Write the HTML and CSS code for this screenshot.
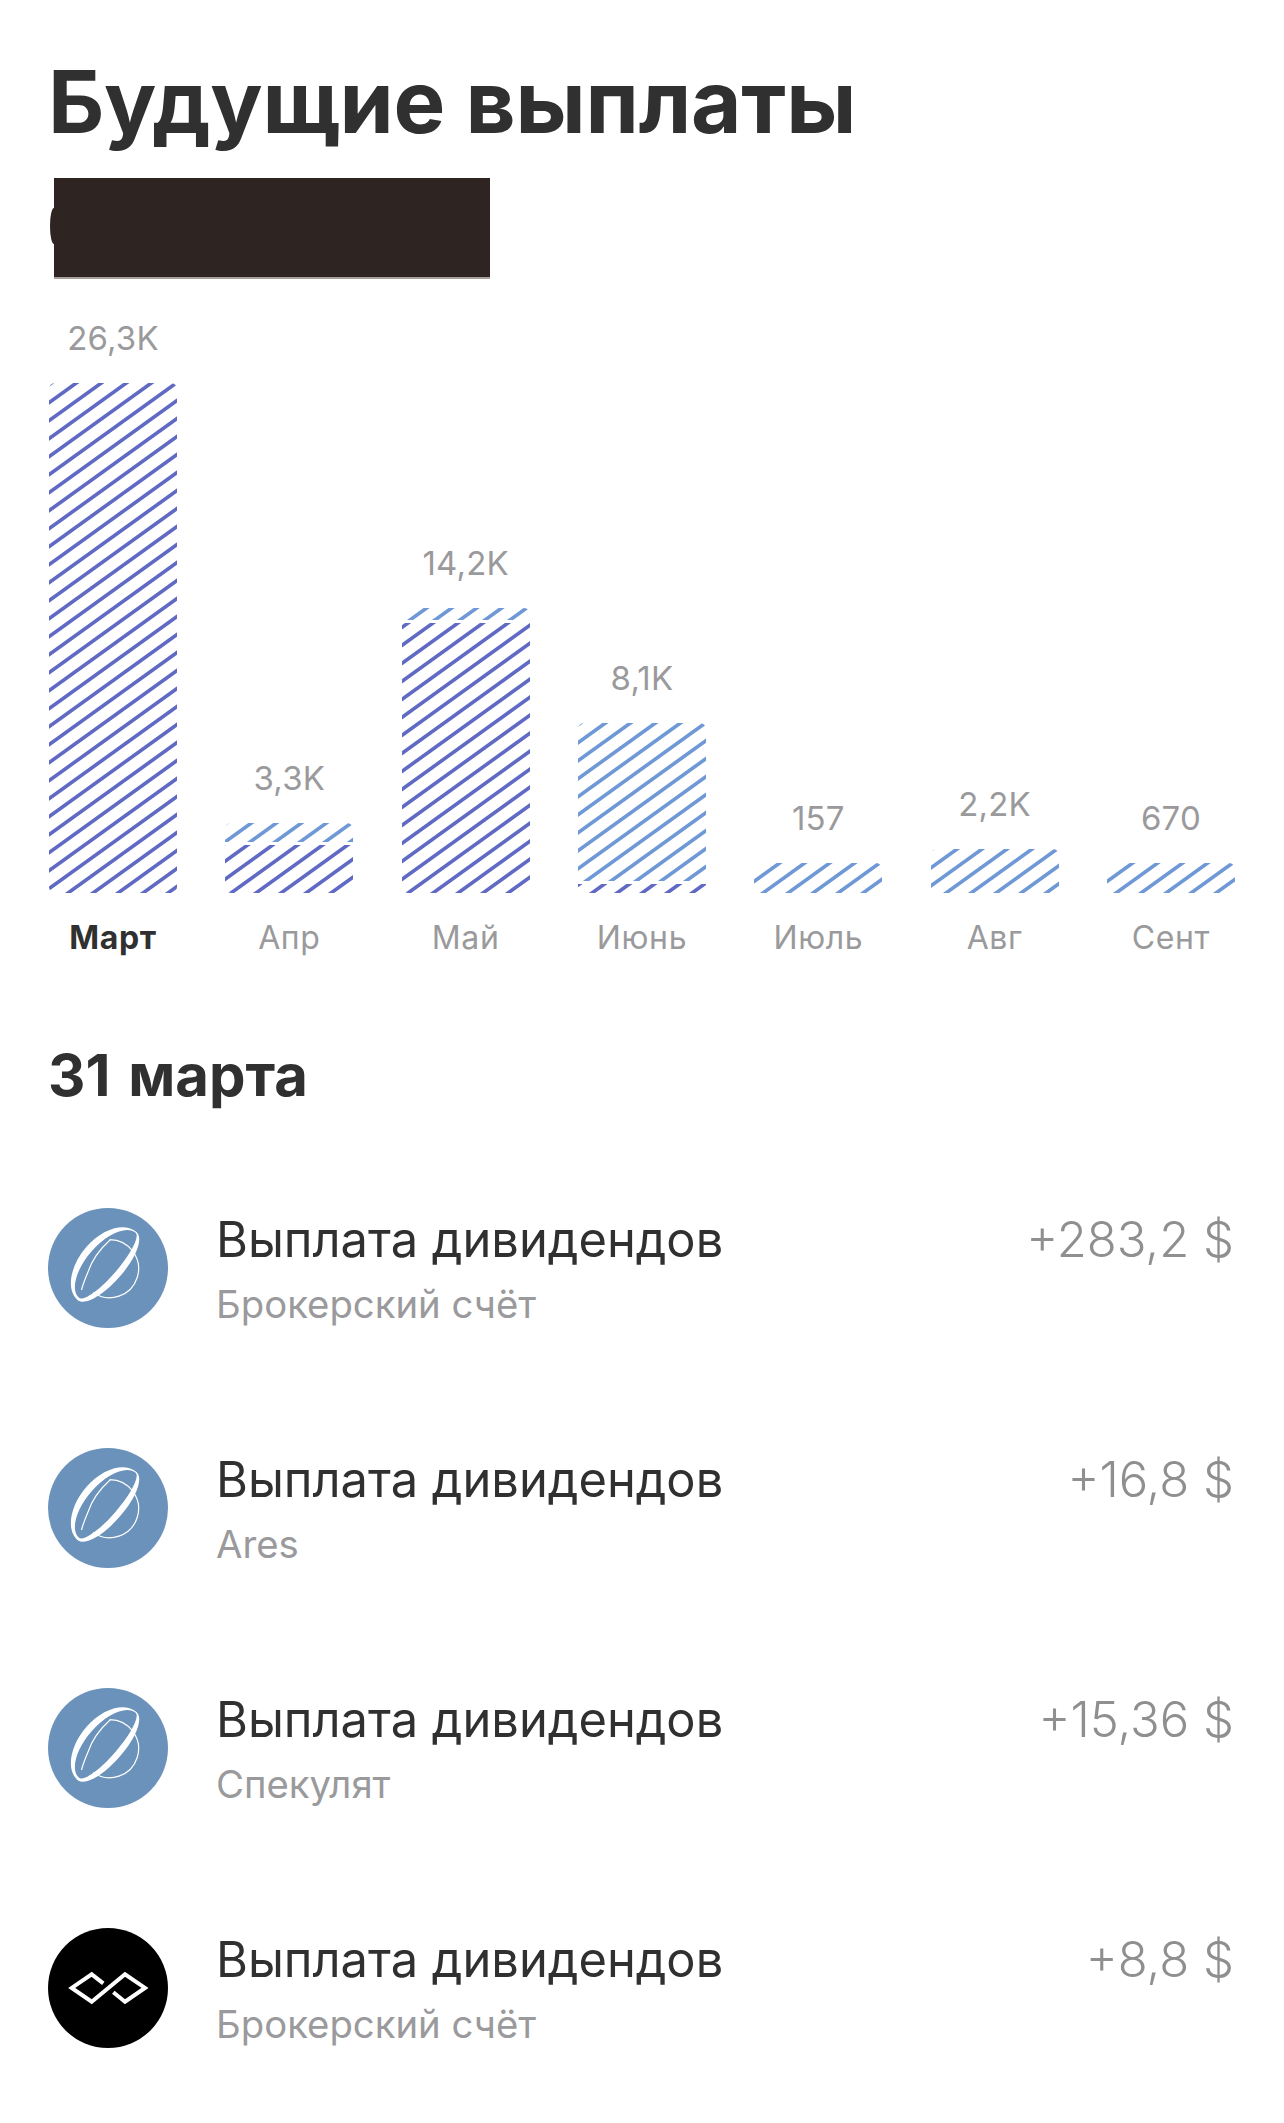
FILE: index.html
```html
<!DOCTYPE html>
<html lang="ru">
<head>
<meta charset="utf-8">
<title>Будущие выплаты</title>
<link rel="stylesheet" href="styles.css">
</head>
<body>
<svg class="defs" width="0" height="0" aria-hidden="true">
  <defs>
    <symbol id="planet" viewBox="0 0 120 120">
      <circle cx="60" cy="60" r="60" fill="#6a92bb"/>
      <path d="M61.7 31.7A29 29 0 1 1 45 84.5M62 32C52 41 44 52 40 64 37 71 35 76 33.5 82" fill="none" stroke="#fff" stroke-width="1.2"/>
      <path fill="#fff" fill-rule="evenodd" d="M88.5 24C76.9 13.9 54.7 20.1 38.3 39 21.9 57.9 17.9 81.9 29.5 92 36.6 98.2 55.7 87.4 72 68.3 88.5 49.6 95.6 30.2 88.5 24ZM87.6 24.8C78.9 17.2 58.9 25.7 43.4 43.5 27.9 61.3 22.3 82.2 31 89.8 35.4 93.6 51.7 82 67.2 64.2 82.7 46.4 92 28.6 87.6 24.8Z"/>
    </symbol>
    <symbol id="loop" viewBox="0 0 120 120">
      <circle cx="60" cy="60" r="60" fill="#000"/>
      <path d="M55.3 55.3 43.7 46.3 23.7 59.9 43.7 73.7 77 46.3 97 59.9 77 73.7 65.3 64.3" fill="none" stroke="#fff" stroke-width="4"/>
    </symbol>
    <pattern id="d1" x="19" y="510" width="25" height="18" patternUnits="userSpaceOnUse"><path class="sd" d="M-30 21.6 5 -3.6M-5 21.6 30 -3.6M20 21.6 55 -3.6"/></pattern>
    <pattern id="d2" x="6" y="70" width="25" height="18" patternUnits="userSpaceOnUse"><path class="sd" d="M-30 21.6 5 -3.6M-5 21.6 30 -3.6M20 21.6 55 -3.6"/></pattern>
    <pattern id="l2" x="0" y="19" width="25" height="18" patternUnits="userSpaceOnUse"><path class="sl" d="M-30 21.6 5 -3.6M-5 21.6 30 -3.6M20 21.6 55 -3.6"/></pattern>
    <pattern id="d3" x="6" y="285" width="25" height="18" patternUnits="userSpaceOnUse"><path class="sd" d="M-30 21.6 5 -3.6M-5 21.6 30 -3.6M20 21.6 55 -3.6"/></pattern>
    <pattern id="l3" x="8" y="12" width="25" height="18" patternUnits="userSpaceOnUse"><path class="sl" d="M-30 21.6 5 -3.6M-5 21.6 30 -3.6M20 21.6 55 -3.6"/></pattern>
    <pattern id="d4" x="14" y="170" width="25" height="18" patternUnits="userSpaceOnUse"><path class="sd" d="M-30 21.6 5 -3.6M-5 21.6 30 -3.6M20 21.6 55 -3.6"/></pattern>
    <pattern id="l4" x="8" y="158" width="25" height="18" patternUnits="userSpaceOnUse"><path class="sl" d="M-30 21.6 5 -3.6M-5 21.6 30 -3.6M20 21.6 55 -3.6"/></pattern>
    <pattern id="l5" x="9" y="30" width="25" height="18" patternUnits="userSpaceOnUse"><path class="sl" d="M-30 21.6 5 -3.6M-5 21.6 30 -3.6M20 21.6 55 -3.6"/></pattern>
    <pattern id="l6" x="15" y="44" width="25" height="18" patternUnits="userSpaceOnUse"><path class="sl" d="M-30 21.6 5 -3.6M-5 21.6 30 -3.6M20 21.6 55 -3.6"/></pattern>
  </defs>
</svg>

<main class="page">
  <h1 class="title">Будущие выплаты</h1>
  <div class="redacted"></div>

  <section class="chart">
    <div class="col">
      <span class="value">26,3K</span>
      <svg class="bar" width="128" height="510"><rect width="128" height="510" fill="url(#d1)"/></svg>
      <span class="month month-active">Март</span>
    </div>
    <div class="col">
      <span class="value">3,3K</span>
      <svg class="bar" width="128" height="70"><rect width="128" height="19" fill="url(#l2)"/><rect y="22" width="128" height="48" fill="url(#d2)"/></svg>
      <span class="month">Апр</span>
    </div>
    <div class="col">
      <span class="value">14,2K</span>
      <svg class="bar" width="128" height="285"><rect width="128" height="12" fill="url(#l3)"/><rect y="15" width="128" height="270" fill="url(#d3)"/></svg>
      <span class="month">Май</span>
    </div>
    <div class="col">
      <span class="value">8,1K</span>
      <svg class="bar" width="128" height="170"><rect width="128" height="158" fill="url(#l4)"/><rect y="161" width="128" height="9" fill="url(#d4)"/></svg>
      <span class="month">Июнь</span>
    </div>
    <div class="col">
      <span class="value">157</span>
      <svg class="bar" width="128" height="30"><rect width="128" height="30" fill="url(#l5)"/></svg>
      <span class="month">Июль</span>
    </div>
    <div class="col">
      <span class="value">2,2K</span>
      <svg class="bar" width="128" height="44"><rect width="128" height="44" fill="url(#l6)"/></svg>
      <span class="month">Авг</span>
    </div>
    <div class="col">
      <span class="value">670</span>
      <svg class="bar" width="128" height="30"><rect width="128" height="30" fill="url(#l5)"/></svg>
      <span class="month">Сент</span>
    </div>
  </section>

  <h2 class="date">31 марта</h2>

  <ul class="list">
    <li class="row">
      <svg class="avatar"><use href="#planet"/></svg>
      <div class="info"><div class="name">Выплата дивидендов</div><div class="sub">Брокерский счёт</div></div>
      <div class="amount">+283,2 $</div>
    </li>
    <li class="row">
      <svg class="avatar"><use href="#planet"/></svg>
      <div class="info"><div class="name">Выплата дивидендов</div><div class="sub">Ares</div></div>
      <div class="amount">+16,8 $</div>
    </li>
    <li class="row">
      <svg class="avatar"><use href="#planet"/></svg>
      <div class="info"><div class="name">Выплата дивидендов</div><div class="sub">Спекулят</div></div>
      <div class="amount">+15,36 $</div>
    </li>
    <li class="row">
      <svg class="avatar"><use href="#loop"/></svg>
      <div class="info"><div class="name">Выплата дивидендов</div><div class="sub">Брокерский счёт</div></div>
      <div class="amount">+8,8 $</div>
    </li>
  </ul>
</main>
</body>
</html>
```

FILE: styles.css
```css
html, body {
  margin: 0;
  padding: 0;
  background: #fff;
}

body {
  width: 1284px;
  height: 2123px;
  overflow: hidden;
  font-family: Inter, "Noto Sans", sans-serif;
  color: #303030;
}

.defs {
  display: block;
  height: 0;
}

.page {
  padding: 52px 49px 0 48px;
}

.title {
  margin: 0;
  font-size: 87px;
  line-height: 100px;
  font-weight: 700;
  letter-spacing: -0.2px;
}

.redacted {
  position: relative;
  width: 436px;
  height: 101px;
  margin: 26px 0 0 6px;
  background: #2e2522;
  border-bottom: 2px solid #a89f99;
  box-sizing: border-box;
}

.redacted::before {
  content: "";
  position: absolute;
  left: -4px;
  top: 30px;
  width: 8px;
  height: 36px;
  border-radius: 50%;
  background: #2e2522;
}

.chart {
  display: flex;
  justify-content: space-between;
  align-items: flex-end;
  margin: 39px 0 0 1px;
}

.col {
  display: flex;
  flex-direction: column;
  align-items: center;
  width: 128px;
}

.value {
  font-size: 33px;
  line-height: 40px;
  color: #9a9a9c;
  margin-bottom: 25px;
  letter-spacing: 0.2px;
}

.bar {
  display: block;
  border-radius: 6px;
}

.sd, .sl {
  fill: none;
  stroke-width: 3.6;
}

.sd {
  stroke: #6069c4;
}

.sl {
  stroke: #6f98d6;
}

.month {
  margin-top: 25px;
  font-size: 32px;
  line-height: 40px;
  color: #9a9a9c;
  letter-spacing: 0.6px;
}

.month-active {
  font-weight: 700;
  color: #303030;
}

.date {
  margin: 83px 0 0;
  font-size: 58px;
  line-height: 68px;
  font-weight: 700;
  word-spacing: 4px;
}

.list {
  list-style: none;
  margin: 99px 0 0;
  padding: 0;
  display: flex;
  flex-direction: column;
  gap: 120px;
}

.row {
  display: flex;
  align-items: flex-start;
  height: 120px;
}

.avatar {
  width: 120px;
  height: 120px;
  flex: none;
}

.info {
  flex: 1;
  margin-left: 48px;
}

.name {
  font-size: 48.8px;
  line-height: 60px;
  margin-top: 2px;
}

.sub {
  font-size: 38.3px;
  line-height: 48px;
  color: #9a9a9c;
  margin-top: 10px;
}

.amount {
  font-size: 49px;
  line-height: 60px;
  margin: 2px 1px 0 0;
  color: #8f8f8f;
  font-weight: 300;
}
```
